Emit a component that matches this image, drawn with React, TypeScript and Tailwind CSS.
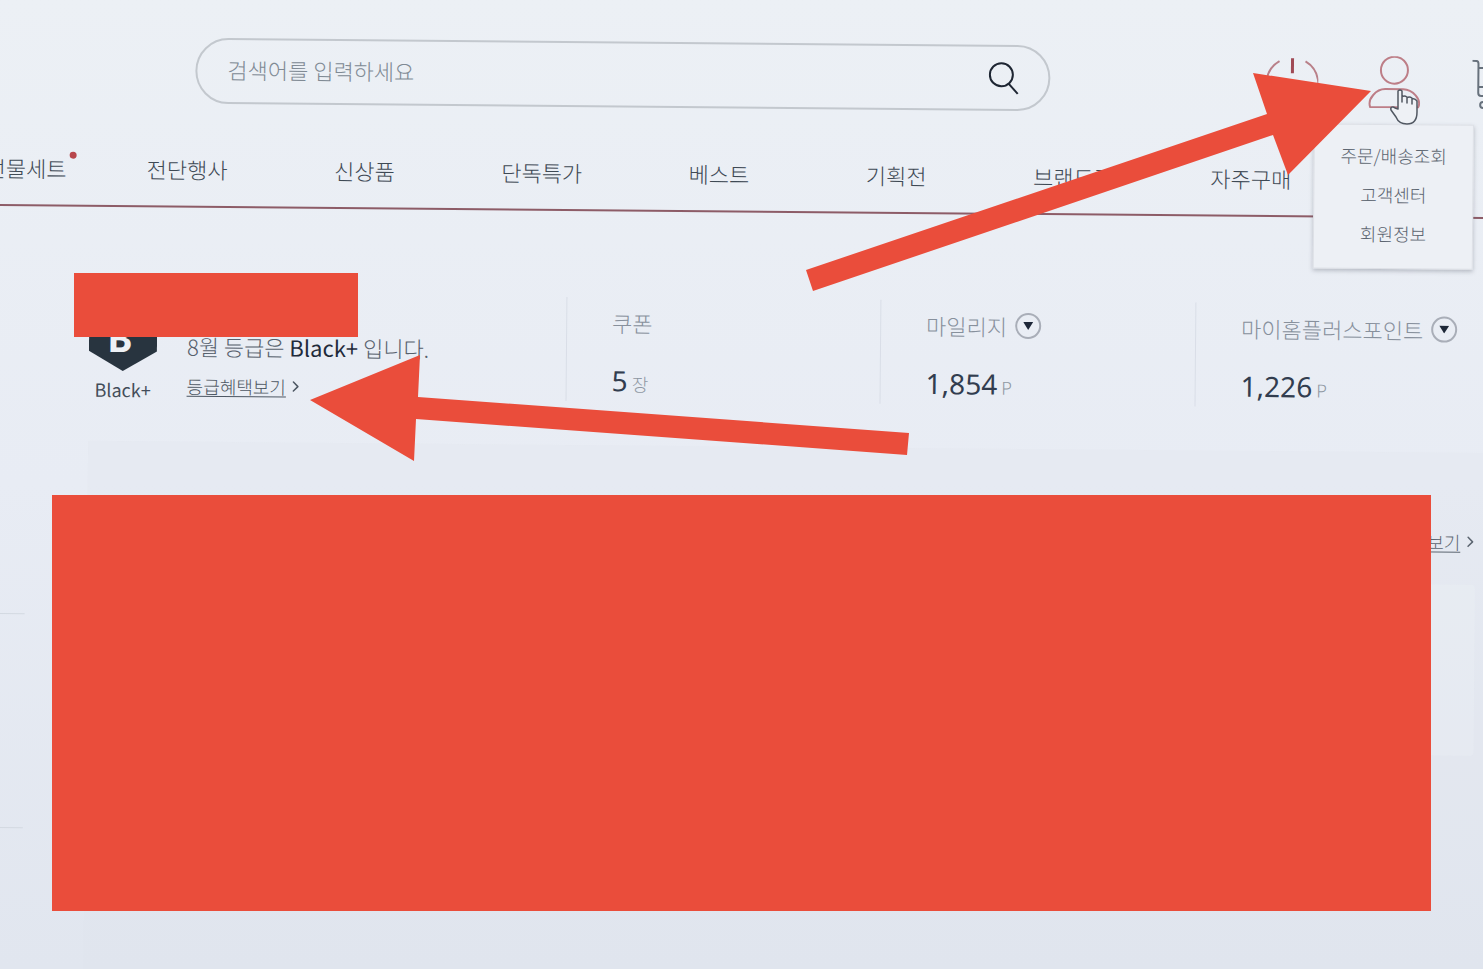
import { ChevronRight } from "lucide-react";

const categories = ["전단행사", "신상품", "단독특가", "베스트", "기획전", "브랜드관", "자주구매"];

const accountLinks = ["주문/배송조회", "고객센터", "회원정보"];

interface BalanceProps {
  label: string;
  value: string;
  unit: string;
  expandable?: boolean;
}

function Balance({ label, value, unit, expandable = false }: BalanceProps) {
  return (
    <div className="h-[104px] border-l border-[#d9dee7] pt-[9px] pl-[45px] whitespace-nowrap">
      <div className="flex items-center gap-2">
        <h2 className="text-[22px] leading-8 font-light text-[#87909c]">{label}</h2>
        {expandable && (
          <button
            type="button"
            aria-label={`${label} 상세`}
            className="flex size-[26px] items-center justify-center rounded-full border-2 border-[#a9aeb8]"
          >
            <svg viewBox="0 0 10 8" className="w-[10px] fill-[#1d2738]" aria-hidden="true">
              <path d="M0 0h10L5 8z" />
            </svg>
          </button>
        )}
      </div>
      <p className="mt-[22px] flex items-baseline gap-1 leading-10">
        <span className="font-['Noto_Sans','Noto_Sans_CJK_KR',sans-serif] text-[28px] text-[#323d4f]">{value}</span>
        <span className="font-['Noto_Sans','Noto_Sans_CJK_KR',sans-serif] text-[18px] font-light text-[#8f98a3]">
          {unit}
        </span>
      </p>
    </div>
  );
}

function SearchBar() {
  return (
    <form
      className="flex h-[66px] flex-1 items-center rounded-full border-2 border-[#c3c8ce] pr-[28px] pl-[30px]"
      onSubmit={(e) => e.preventDefault()}
    >
      <input
        type="search"
        aria-label="검색어"
        placeholder="검색어를 입력하세요"
        className="min-w-0 flex-1 bg-transparent pb-1 text-[22px] font-light text-[#4b5663] outline-none placeholder:text-[#808a94]"
      />
      <button type="submit" aria-label="검색">
        <svg viewBox="0 0 32 34" className="w-[32px] fill-none stroke-[#1e2633] stroke-2" aria-hidden="true">
          <circle cx="13" cy="14" r="11.500" />
          <path d="M20.500 23L29.500 33" />
        </svg>
      </button>
    </form>
  );
}

function UserMenu() {
  return (
    <div className="flex gap-[50px] pt-2">
      <button type="button" aria-label="로그아웃">
        <svg viewBox="0 0 52 52" className="w-[52px] fill-none stroke-[#b98089] stroke-2" aria-hidden="true">
          <path d="M13 3A26 26 0 1 0 39 3" />
          <path d="M26-2v17" className="stroke-[#a04a55] stroke-3" />
        </svg>
      </button>

      <div className="relative">
        <button type="button" aria-label="마이페이지" aria-expanded="true">
          <svg viewBox="0 0 52 52" className="w-[52px] fill-none stroke-[#bd7e87] stroke-2" aria-hidden="true">
            <circle cx="26" cy="14" r="13.500" />
            <path d="M2 51C-1 43 8 33 17 33h18c9 0 19 10 15 18z" />
          </svg>
        </button>
        <ul className="absolute top-[68px] left-1/2 z-10 w-[160px] -translate-x-1/2 border border-[#dde0e6] bg-[#edf0f5] pt-[11px] pb-[15px] text-center shadow-[0_2px_4px_rgba(80,85,100,0.35)]">
          {accountLinks.map((link) => (
            <li key={link} className="h-[39px]">
              <a href="#" className="text-[18px] leading-[39px] font-light whitespace-nowrap text-[#5c6570]">
                {link}
              </a>
            </li>
          ))}
        </ul>
      </div>

      <button type="button" aria-label="장바구니">
        <svg viewBox="0 0 52 52" className="w-[52px] fill-none stroke-[#67717c] stroke-2" aria-hidden="true">
          <path d="M2 1h4q2 0 2 3v29q0 3 3 3h33M8 8h40l-4 19H8" />
          <circle cx="13" cy="45" r="3" />
          <circle cx="40" cy="45" r="3" />
        </svg>
      </button>
    </div>
  );
}

function GradeBadge() {
  return (
    <div className="w-[68px]">
      <svg viewBox="0 0 68 78" className="w-[68px]" aria-hidden="true">
        <path d="M34 0L68 20V58L34 78L0 58V20z" className="fill-[#28343f]" />
        <text
          x="31"
          y="59"
          textAnchor="middle"
          className="fill-[#edf1f5] font-['Noto_Sans',sans-serif] text-[38px] font-bold"
        >
          B
        </text>
      </svg>
      <p className="mt-[6px] text-center text-[18px] leading-6 text-[#434d59]">Black+</p>
    </div>
  );
}

// Red marker shapes laid over the page
function Annotations() {
  return (
    <>
      <div className="absolute top-[273px] left-[74px] h-[64px] w-[284px] bg-[#ea4d3b]" />
      <div className="absolute top-[495px] left-[52px] h-[416px] w-[1379px] bg-[#ea4d3b]" />
      <svg
        viewBox="0 0 1483 969"
        className="pointer-events-none absolute top-0 left-0 z-20 h-[969px] w-[1483px]"
        aria-hidden="true"
      >
        <g className="fill-[#ea4d3b]">
          <path d="M1371 91L1253 73L1267 114L806 270L813 291L1273 135L1288 175z" />
          <path d="M310 400L420 355L418 397L909 433L907 455L416 419L414 461z" />
        </g>
        <path
          d="M1398 109V91q2-2 4 0v11V97q2-2 5 0v6V98q2-2 5 0v6V99q3-1 5 2v11c0 8-4 12-10 12s-9-2-11-7l-5-7c-1-3 2-4 4-2z"
          className="fill-[#eef1f5] stroke-[#515862]"
          strokeWidth="1.500"
          strokeLinejoin="round"
        />
      </svg>
    </>
  );
}

export default function App() {
  return (
    <div className="relative flex min-h-screen flex-col overflow-hidden bg-linear-to-b from-[#ecf0f5] via-[#e8ecf4] to-[#e1e6ef] font-['Noto_Sans_CJK_KR',sans-serif]">
      <div className="-mr-4 flex flex-1 origin-top-left rotate-[0.5deg] flex-col">
        <header>
          <div className="-mr-[24px] flex h-[102px] items-start gap-[216px] pt-9 pl-[196px]">
            <SearchBar />
            <UserMenu />
          </div>
          <nav className="mt-8 border-b-2 border-[#8d5c67] pr-[158px]">
            <ul className="flex h-[70px] items-center pb-[3px] text-[22px] font-light whitespace-nowrap text-[#3e4954]">
              <li className="flex w-[100px] justify-end pr-[32px]">
                <a href="#" className="relative">
                  선물세트
                  <span className="absolute top-0 -right-[10px] size-[7px] rounded-full bg-[#b8474c]" />
                </a>
              </li>
              {categories.map((name) => (
                <li key={name} className="flex-1 text-center">
                  <a href="#">{name}</a>
                </li>
              ))}
            </ul>
          </nav>
        </header>

        <section className="grid grid-cols-[477fr_314fr_315fr_301fr] pt-[86px] pb-10 pl-[92px]">
          <div className="flex gap-[30px]">
            <GradeBadge />
            <div className="pt-9 whitespace-nowrap">
              <p className="text-[22px] leading-8 font-light text-[#56606c]">
                8월 등급은 <strong className="font-normal text-[#1f2b3b]">Black+</strong> 입니다.
              </p>
              <a href="#" className="mt-3 flex items-center gap-px text-[18px] leading-6 font-light text-[#4d5763]">
                <span className="underline underline-offset-2">등급혜택보기</span>
                <ChevronRight size={18} strokeWidth={2} />
              </a>
            </div>
          </div>
          <Balance label="쿠폰" value="5" unit="장" />
          <Balance label="마일리지" value="1,854" unit="P" expandable />
          <Balance label="마이홈플러스포인트" value="1,226" unit="P" expandable />
        </section>

        <div className="flex flex-1">
          <aside className="w-[92px] shrink-0 pt-[173px]">
            <hr className="w-[30px] border-[#d3d9e1]" />
            <hr className="mt-[213px] w-[30px] border-[#d3d9e1]" />
          </aside>
          <main className="flex-1 bg-[#dfe3eb]/25 pt-[77px] pr-[19px] pl-8">
            <a
              href="#"
              className="-mr-1 flex items-center justify-end gap-px text-[18px] leading-6 font-light text-[#5c6570]"
            >
              <span className="underline underline-offset-2">더보기</span>
              <ChevronRight size={18} strokeWidth={2} />
            </a>
            <div className="mt-[31px] h-[171px] rounded bg-[#eceff5]/40" />
          </main>
        </div>
      </div>

      <Annotations />
    </div>
  );
}
